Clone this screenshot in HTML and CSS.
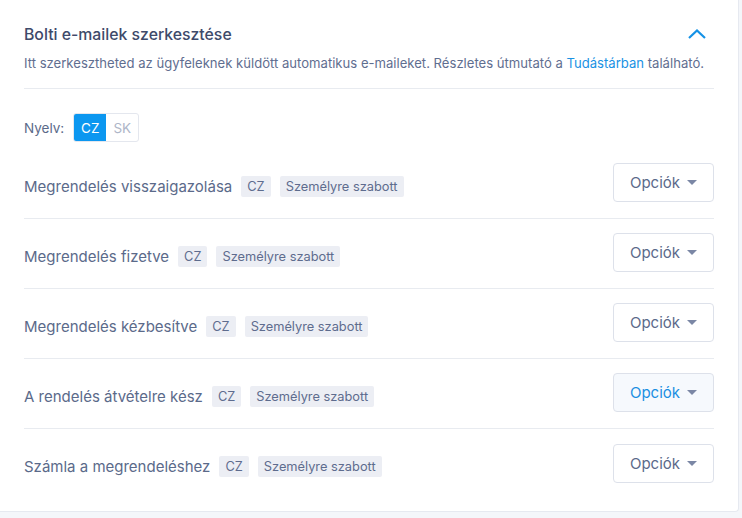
FILE: index.html
```html
<!DOCTYPE html>
<html lang="hu">
<head>
<meta charset="utf-8">
<link rel="stylesheet" href="styles.css">
</head>
<body>
<div class="card">
  <div class="header">
    <div class="header-top">
      <h2 class="title">Bolti e-mailek szerkesztése</h2>
      <svg class="chevron" width="18" height="10" viewBox="0 0 18 10"><path d="M1 9 L9 1.5 L17 9" fill="none" stroke="#1592e6" stroke-width="2.2"/></svg>
    </div>
    <p class="desc">Itt szerkesztheted az ügyfeleknek küldött automatikus e-maileket. Részletes útmutató a <a href="#" class="link">Tudástárban</a> található.</p>
  </div>
  <div class="lang">
    <span class="lang-label">Nyelv:</span>
    <div class="seg">
      <span class="seg-btn active">CZ</span>
      <span class="seg-btn">SK</span>
    </div>
  </div>
  <div class="list">
    <div class="row">
      <div class="row-left"><span class="row-title">Megrendelés visszaigazolása</span><span class="tag">CZ</span><span class="tag">Személyre szabott</span></div>
      <button class="btn">Opciók <span class="caret"></span></button>
    </div>
    <div class="row">
      <div class="row-left"><span class="row-title">Megrendelés fizetve</span><span class="tag">CZ</span><span class="tag">Személyre szabott</span></div>
      <button class="btn">Opciók <span class="caret"></span></button>
    </div>
    <div class="row">
      <div class="row-left"><span class="row-title">Megrendelés kézbesítve</span><span class="tag">CZ</span><span class="tag">Személyre szabott</span></div>
      <button class="btn">Opciók <span class="caret"></span></button>
    </div>
    <div class="row">
      <div class="row-left"><span class="row-title">A rendelés átvételre kész</span><span class="tag">CZ</span><span class="tag">Személyre szabott</span></div>
      <button class="btn hover">Opciók <span class="caret"></span></button>
    </div>
    <div class="row last">
      <div class="row-left"><span class="row-title">Számla a megrendeléshez</span><span class="tag">CZ</span><span class="tag">Személyre szabott</span></div>
      <button class="btn">Opciók <span class="caret"></span></button>
    </div>
  </div>
</div>
</body>
</html>
```
FILE: styles.css
```css
* { box-sizing: border-box; }
html, body { margin: 0; padding: 0; }
body {
  background: #f4f6fa;
  font-family: Inter, "Noto Sans", sans-serif;
  color: #5b6a8a;
  width: 742px;
  height: 518px;
  overflow: hidden;
}
.card {
  width: 739px;
  height: 512px;
  background: #fff;
  border-right: 1px solid #e6e9f0;
  border-bottom: 1px solid #e6e9f0;
  border-bottom-right-radius: 4px;
  padding: 0 24px 0 24px;
}
.header {
  padding-top: 22px;
  border-bottom: 1px solid #e8ebf0;
  height: 89px;
}
.header-top {
  display: flex;
  justify-content: space-between;
  align-items: center;
  height: 24px;
}
.title {
  margin: 0;
  font-size: 15.8px;
  font-weight: 500;
  color: #3e4a6a;
}
.chevron { margin-right: 8px; }
.desc {
  margin: 9px 0 0;
  font-size: 13.1px;
  color: #5f6e90;
  white-space: nowrap;
}
.link { color: #1a92e4; text-decoration: none; }
.lang {
  display: flex;
  align-items: center;
  margin-top: 24px;
  height: 29px;
}
.lang-label { font-size: 13.5px; color: #5b6a8a; margin-right: 9px; }
.seg {
  display: flex;
  border: 1px solid #e4e7ee;
  border-radius: 3px;
  overflow: hidden;
  height: 29px;
}
.seg-btn {
  width: 32px;
  display: flex;
  align-items: center;
  justify-content: center;
  font-size: 13.5px;
  color: #aeb6c8;
}
.seg-btn.active { background: #0c97f0; color: #fff; }
.list { margin-top: 7px; }
.row {
  display: flex;
  justify-content: space-between;
  align-items: center;
  height: 70px;
  padding-bottom: 2px;
  border-bottom: 1px solid #e8ebf0;
}
.row.last { border-bottom: none; }
.row-left {
  display: flex;
  align-items: center;
  padding-top: 7px;
}
.row-title { font-size: 15px; color: #5b6a8a; margin-right: 9px; }
.tag {
  background: #eceef4;
  color: #5e6c8e;
  font-size: 12.8px;
  padding: 3px 6px;
  border-radius: 2px;
  margin-right: 9px;
  line-height: 15px;
}
.btn {
  width: 101px;
  height: 39px;
  border: 1px solid #dde1ea;
  border-radius: 4px;
  background: #fff;
  font-family: inherit;
  font-size: 15px;
  color: #5b6a8a;
  display: flex;
  align-items: center;
  justify-content: center;
  gap: 7px;
  padding: 0;
}
.btn.hover { background: #f6f9fd; color: #1a8fe2; }
.caret {
  width: 0; height: 0;
  border-left: 5px solid transparent;
  border-right: 5px solid transparent;
  border-top: 5px solid #7b87a5;
}
```
